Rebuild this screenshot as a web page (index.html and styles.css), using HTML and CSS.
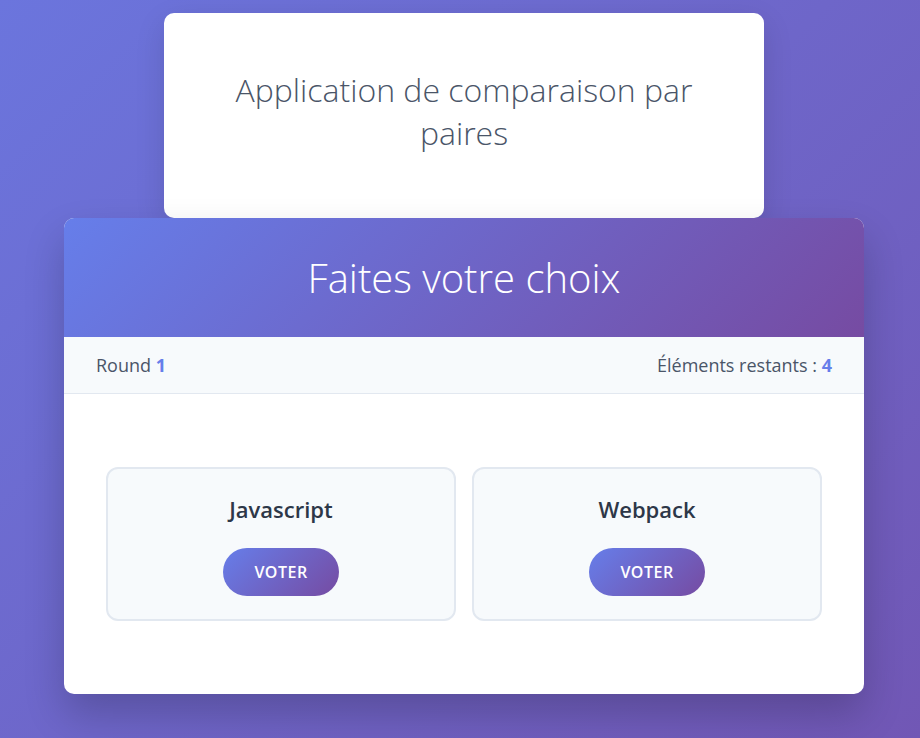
FILE: index.html
```html
<!DOCTYPE html>
<html lang="fr">
<head>
<meta charset="utf-8">
<title>Comparaison par paires</title>
<link rel="stylesheet" href="styles.css">
</head>
<body>
<div class="page">
  <header class="intro">
    <h1 class="intro-title">Application de comparaison par paires</h1>
  </header>
  <main class="panel">
    <div class="panel-head">
      <h2 class="panel-title">Faites votre choix</h2>
    </div>
    <div class="stats">
      <span class="stat">Round <strong class="num">1</strong></span>
      <span class="stat">Éléments restants : <strong class="num">4</strong></span>
    </div>
    <div class="choices">
      <div class="choice">
        <h3 class="choice-name">Javascript</h3>
        <button class="vote">VOTER</button>
      </div>
      <div class="choice">
        <h3 class="choice-name">Webpack</h3>
        <button class="vote">VOTER</button>
      </div>
    </div>
  </main>
</div>
</body>
</html>
```

FILE: styles.css
```css
* { box-sizing: border-box; }
html, body { margin: 0; height: 100%; }
body {
  font-family: "Open Sans", "Noto Sans", sans-serif;
  background: linear-gradient(135deg, #6b75dd 0%, #7157b5 100%);
  min-height: 738px;
}
.page {
  display: flex;
  flex-direction: column;
  align-items: center;
  padding-top: 13px;
  padding-left: 8px;
}
.intro {
  position: relative;
  z-index: 1;
  width: 600px;
  height: 205px;
  background: #fff;
  border-radius: 10px;
  box-shadow: 0 10px 30px rgba(0,0,0,0.12);
  display: flex;
  align-items: center;
  justify-content: center;
  padding: 0 40px 10px;
}
.intro-title {
  margin: 0;
  font-weight: 300;
  font-size: 32px;
  line-height: 43px;
  color: #4a5568;
  text-align: center;
}
.panel {
  position: relative;
  z-index: 2;
  width: 800px;
  background: #fff;
  border-radius: 10px;
  overflow: hidden;
  box-shadow: 0 20px 40px rgba(0,0,0,0.2);
}
.panel-head {
  height: 119px;
  background: linear-gradient(135deg, #667eea 0%, #764ba2 100%);
  display: flex;
  align-items: center;
  justify-content: center;
}
.panel-title {
  margin: 0;
  color: #fff;
  font-weight: 300;
  font-size: 40px;
}
.stats {
  height: 57px;
  background: #f7fafc;
  border-bottom: 1px solid #e2e8f0;
  display: flex;
  align-items: center;
  justify-content: space-between;
  padding: 0 32px;
  font-size: 18px;
  font-weight: 500;
  color: #4a5568;
}
.num { color: #667eea; font-weight: 700; }
.choices {
  display: grid;
  grid-template-columns: 350px 350px;
  gap: 16px;
  justify-content: center;
  padding: 73px 0;
}
.choice {
  height: 154px;
  background: #f7fafc;
  border: 2px solid #e2e8f0;
  border-radius: 12px;
  display: flex;
  flex-direction: column;
  align-items: center;
  padding-top: 24px;
}
.choice-name {
  margin: 0;
  font-size: 22px;
  font-weight: 600;
  line-height: 32px;
  color: #2d3748;
}
.vote {
  margin-top: 23px;
  width: 116px;
  height: 48px;
  border: 0;
  border-radius: 24px;
  background: linear-gradient(135deg, #667eea 0%, #764ba2 100%);
  color: #fff;
  font-family: inherit;
  font-size: 16px;
  font-weight: 600;
  letter-spacing: 0.5px;
  cursor: pointer;
}
```
